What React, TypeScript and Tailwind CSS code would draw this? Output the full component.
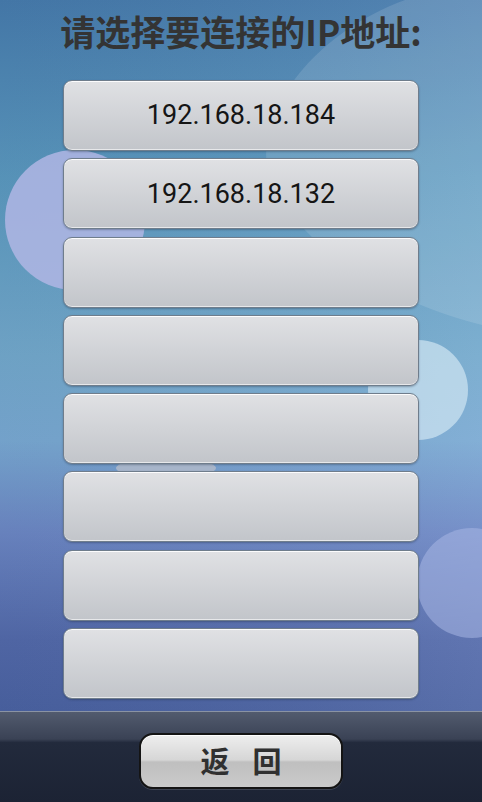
import React from 'react';

const ips = ['192.168.18.184', '192.168.18.132', '', '', '', '', '', ''];

// wallpaper bubbles behind the list
const Wallpaper = () => (
  <svg
    className="absolute inset-0 h-full w-full"
    viewBox="0 0 482 711"
    preserveAspectRatio="none"
  >
    <defs>
      <linearGradient id="bg" x1="0" y1="0" x2="0" y2="1">
        <stop offset="0" stopColor="#467bad" />
        <stop offset="0.25" stopColor="#5a98bf" />
        <stop offset="0.5" stopColor="#72a8cc" />
        <stop offset="0.62" stopColor="#78a8d2" />
        <stop offset="0.75" stopColor="#6b86c4" />
        <stop offset="0.9" stopColor="#5269aa" />
        <stop offset="1" stopColor="#4a62a2" />
      </linearGradient>
      <linearGradient id="side" x1="0" y1="0" x2="1" y2="0">
        <stop offset="0" stopColor="#000" stopOpacity="0.04" />
        <stop offset="1" stopColor="#fff" stopOpacity="0.08" />
      </linearGradient>
    </defs>
    <rect width="482" height="711" fill="url(#bg)" />
    <rect width="482" height="711" fill="url(#side)" />
    <path
      d="M 405 0 C 310 35, 255 115, 268 170 C 285 235, 380 300, 482 325 L 482 0 Z"
      fill="#ffffff"
      fillOpacity="0.12"
    />
    <circle cx="75" cy="220" r="70" fill="#b0b6e4" fillOpacity="0.85" />
    <circle cx="418" cy="390" r="50" fill="#d0e6f2" fillOpacity="0.7" />
    <circle cx="472" cy="583" r="55" fill="#a8b6e4" fillOpacity="0.55" />
    <ellipse cx="166" cy="468" rx="50" ry="10" fill="#b4bcca" fillOpacity="0.8" />
  </svg>
);

export default function App() {
  return (
    <div className="flex h-[802px] w-[482px] flex-col overflow-hidden bg-[#1e2537]">
      <div className="relative h-[711px] w-full">
        <Wallpaper />
        <div className="relative flex flex-col items-center">
          <h1 className="pt-[10px] text-center text-[35px] font-bold leading-[42px] text-[#343434] [font-family:'Noto_Sans_CJK_SC',sans-serif]">
            请选择要连接的IP地址:
          </h1>
          <div className="mt-[28px] flex w-[356px] flex-col gap-[7.3px]">
            {ips.map((ip, i) => (
              <button
                key={i}
                className="flex h-[71px] w-full items-center justify-center rounded-[9px] border border-[#6f7d8c] bg-gradient-to-b from-[#e0e1e4] to-[#c2c5ca] text-[27px] text-[#151515] shadow-[inset_0_1px_0_rgba(255,255,255,0.9),inset_0_-1px_0_rgba(255,255,255,0.6),0_1px_2px_rgba(30,40,60,0.35)] [font-family:Roboto,sans-serif]"
              >
                {ip}
              </button>
            ))}
          </div>
        </div>
      </div>

      {/* bottom bar */}
      <div className="flex h-[91px] w-full flex-col border-t border-[#8a93a3] bg-[linear-gradient(to_bottom,#525b6e_0%,#3a4255_30%,#222a3c_34%,#1c2334_100%)]">
        <div className="flex flex-1 items-center justify-center pt-[7px]">
          <button className="flex h-[56px] w-[204px] items-center justify-center gap-[23px] rounded-[14px] border-2 border-[#141414] bg-[linear-gradient(to_bottom,#eeeeee_0%,#d6d6d6_48%,#bfbfbf_52%,#cacaca_100%)] pt-[1px] text-[29px] font-bold text-[#303030] shadow-[inset_0_1px_0_rgba(255,255,255,0.9),0_1px_0_rgba(255,255,255,0.15)] [font-family:'Noto_Sans_CJK_SC',sans-serif]">
            <span>返</span>
            <span>回</span>
          </button>
        </div>
      </div>
    </div>
  );
}
